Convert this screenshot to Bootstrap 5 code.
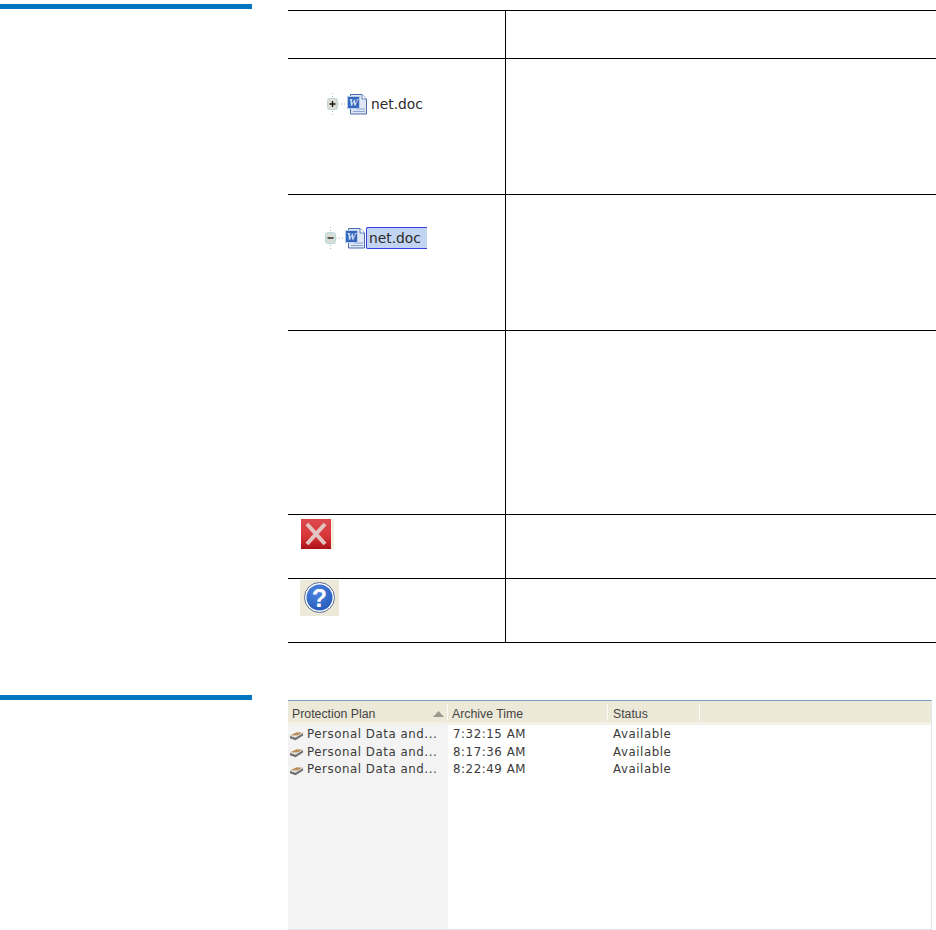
<!DOCTYPE html>
<html lang="en">
<head>
<meta charset="utf-8">
<title>Restore reference</title>
<link href="https://cdn.jsdelivr.net/npm/bootstrap@5.3.0/dist/css/bootstrap.min.css" rel="stylesheet">
<style>
html,body{background:#fff;overflow:hidden}
body{height:930px;font-family:"DejaVu Sans","Liberation Sans",sans-serif}
.side-col{width:252px;margin-right:36px;flex:none}
.rule-bar{height:5px;background:#0077bf}
.main-col{width:648px;flex:none}
.sec-one{height:695px}
.sec-one .rule-bar{margin-top:4px}
.sec-one .main-col{padding-top:10px}
.spec-tbl{width:648px;table-layout:fixed;border-collapse:collapse;margin:0}
.spec-tbl td{padding:0;border-top:1px solid #000;border-bottom:1px solid #000;vertical-align:top;background:#fff}
.spec-tbl td:first-child{width:217px;border-right:1px solid #000}
.h-a{height:48px}.h-b{height:136px}.h-c{height:184px}.h-d{height:64px}
.tree-node{height:22px;color:#2a2a2a;font-size:13.8px;line-height:22px}
.node-plus{margin:34px 0 0 38px}
.node-minus{margin:32px 0 0 36px}
.node-sel{background:#c2d4f1;border:1px solid #3a3fe0;border-right:0;border-radius:2px 0 0 2px;padding:0 0 0 2px;width:61px;height:22px;line-height:20px}
.node-name{margin-left:3px}
.x-ico{margin:4px 0 0 13px;display:block}
.q-ico{margin:1px 0 0 12px;display:block}
.grid-panel{width:644px;height:230px;margin-top:5px;border-top:1px solid #7b9ccb;border-right:1px solid #dfe6ee;border-bottom:1px solid #dfe6ee;background:#fff}
.grid-col{flex:none}
.c-plan{width:160px;background:#f3f3f3}
.c-time{width:160px}
.c-stat{width:92px}
.c-rest{flex:1}
.grid-head{height:24px;background:#ece9d8;border-bottom:3px solid #f4f2e8;font:12.3px/26px "Liberation Sans",sans-serif;color:#444;position:relative;white-space:nowrap}
.grid-head span{padding-left:4px}
.c-stat .grid-head span{padding-left:5px}
.grid-head::after{content:"";position:absolute;right:0;top:3px;bottom:1px;width:1px;background:#fbfaf5}
.c-rest .grid-head::after{display:none}
.sort-mark{position:absolute;left:145px;top:10px}
.grid-rows{padding-top:1px;background:inherit}
.grid-cell{height:17.5px;font-size:11.8px;line-height:17.5px;color:#3a3a3a;letter-spacing:.55px;white-space:nowrap;display:flex;align-items:center}
.c-plan .grid-cell svg{margin:0 3px 0 1px;flex:none}
.c-time .grid-cell{padding-left:5px}
.c-stat .grid-cell{padding-left:5px}
</style>
</head>
<body class="m-0">
<svg width="0" height="0" class="position-absolute">
  <defs>
    <symbol id="word-doc" viewBox="0 0 21 21">
      <path d="M3.500 .5H15l4.500 4.500v15H3.500z" fill="#dfe7f6" stroke="#4a6ea8"/>
      <path d="M15 .5V5h4.500" fill="#fff" stroke="#5c7fb5"/>
      <path d="M9 15h9M6 17.500h12" stroke="#8aa3cf"/>
      <rect x=".5" y="2.500" width="12" height="12" fill="#3666be" stroke="#b9cdea"/>
      <text x="6.500" y="12" text-anchor="middle" font-family="Liberation Serif,serif" font-weight="700" font-style="italic" font-size="10.500" fill="#dfe9fa">W</text>
    </symbol>
    <symbol id="tray" viewBox="0 0 16 12">
      <path d="M1 6.500 8 3l7 .5-5 3z" fill="#b9905a"/>
      <path d="M1 6.500l6 2 8-5v3L7 11.500 1 9.500z" fill="#6f6f6f"/>
      <path d="M1 6.500l6 2 8-5" fill="none" stroke="#e4e4e4"/>
    </symbol>
  </defs>
</svg>

<section class="d-flex sec-one">
  <div class="side-col"><div class="rule-bar"></div></div>
  <div class="main-col">
    <table class="spec-tbl">
      <tr class="h-a"><td></td><td></td></tr>
      <tr class="h-b">
        <td>
          <div class="tree-node node-plus d-flex align-items-center">
            <svg width="21" height="22" viewBox="0 0 21 22"><path d="M6.500 0v22M12 11h9" stroke="#bbb" stroke-dasharray="1 2"/><rect x="1.500" y="5.500" width="10" height="11" rx="2" fill="#dcdcd6" stroke="#c3d8d8"/><path d="M3.500 11h6M6.500 8v6" stroke="#111" stroke-width="1.300"/></svg>
            <svg width="21" height="21"><use href="#word-doc"/></svg>
            <span class="node-name">net.doc</span>
          </div>
        </td>
        <td></td>
      </tr>
      <tr class="h-b">
        <td>
          <div class="tree-node node-minus d-flex align-items-center">
            <svg width="21" height="22" viewBox="0 0 21 22"><path d="M6.500 0v22M12 11h9" stroke="#bbb" stroke-dasharray="1 2"/><rect x="1.500" y="5.500" width="10" height="11" rx="2" fill="#dcdcd6" stroke="#b5dcdc"/><path d="M3.500 11h6" stroke="#111" stroke-width="1.300"/></svg>
            <svg width="21" height="21"><use href="#word-doc"/></svg>
            <span class="node-sel">net.doc</span>
          </div>
        </td>
        <td></td>
      </tr>
      <tr class="h-c"><td></td><td></td></tr>
      <tr class="h-d">
        <td>
          <svg class="x-ico" width="33" height="30" viewBox="0 0 33 30">
            <defs>
              <linearGradient id="red-g" x1="0" y1="0" x2="0" y2="1"><stop offset="0" stop-color="#dc4a4e"/><stop offset=".55" stop-color="#d8383c"/><stop offset="1" stop-color="#ad1216"/></linearGradient>
              <filter id="soft-x"><feGaussianBlur stdDeviation=".6"/></filter>
            </defs>
            <rect width="33" height="30" fill="#f3f0e2"/>
            <rect width="30" height="30" fill="url(#red-g)"/>
            <path d="M6 5l18 20M24 5 6 25" stroke="#e2c6c2" stroke-width="4" filter="url(#soft-x)"/>
          </svg>
        </td>
        <td></td>
      </tr>
      <tr class="h-d">
        <td>
          <svg class="q-ico" width="39" height="36" viewBox="0 0 39 36">
            <defs><radialGradient id="blue-g" cx=".4" cy=".3" r=".8"><stop offset="0" stop-color="#4f86e0"/><stop offset="1" stop-color="#2256b8"/></radialGradient></defs>
            <rect width="39" height="36" fill="#ece9d8"/>
            <circle cx="19.500" cy="17.500" r="15" fill="#fff" stroke="#5a6d9a"/>
            <circle cx="19.500" cy="17.500" r="13" fill="url(#blue-g)"/>
            <text x="19.500" y="26.500" text-anchor="middle" font-family="Liberation Sans,sans-serif" font-weight="700" font-size="25" fill="#fff">?</text>
          </svg>
        </td>
        <td></td>
      </tr>
    </table>
  </div>
</section>

<section class="d-flex">
  <div class="side-col"><div class="rule-bar"></div></div>
  <div class="main-col">
    <div class="grid-panel d-flex">
      <div class="grid-col c-plan">
        <div class="grid-head"><span>Protection Plan</span>
          <svg class="sort-mark" width="11" height="6" viewBox="0 0 11 6"><path d="M5.500 0 11 6H0z" fill="#9c9a8e"/></svg>
        </div>
        <div class="grid-rows">
          <div class="grid-cell"><svg width="15" height="12"><use href="#tray"/></svg>Personal Data and...</div>
          <div class="grid-cell"><svg width="15" height="12"><use href="#tray"/></svg>Personal Data and...</div>
          <div class="grid-cell"><svg width="15" height="12"><use href="#tray"/></svg>Personal Data and...</div>
        </div>
      </div>
      <div class="grid-col c-time">
        <div class="grid-head"><span>Archive Time</span></div>
        <div class="grid-rows">
          <div class="grid-cell">7:32:15 AM</div>
          <div class="grid-cell">8:17:36 AM</div>
          <div class="grid-cell">8:22:49 AM</div>
        </div>
      </div>
      <div class="grid-col c-stat">
        <div class="grid-head"><span>Status</span></div>
        <div class="grid-rows">
          <div class="grid-cell">Available</div>
          <div class="grid-cell">Available</div>
          <div class="grid-cell">Available</div>
        </div>
      </div>
      <div class="grid-col c-rest"><div class="grid-head"></div></div>
    </div>
  </div>
</section>
<script src="https://cdn.jsdelivr.net/npm/bootstrap@5.3.0/dist/js/bootstrap.bundle.min.js"></script>
</body>
</html>
